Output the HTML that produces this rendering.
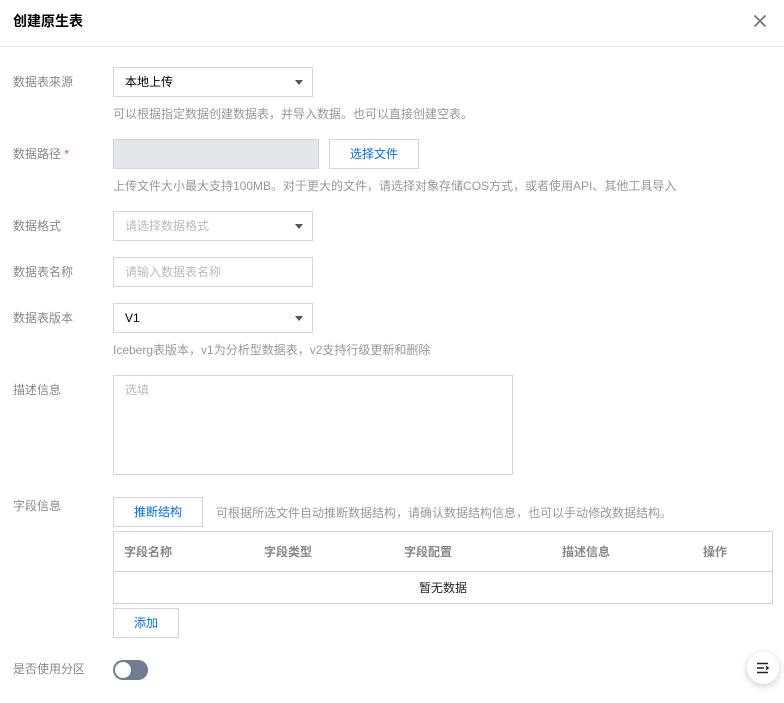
<!DOCTYPE html>
<html><head><meta charset="utf-8"><style>
*{margin:0;padding:0;box-sizing:border-box}
body{width:784px;height:703px;background:#fff;position:relative;overflow:hidden;font-family:"Liberation Sans","Noto Sans CJK SC",sans-serif;font-size:12px;color:#000}
.a{position:absolute;white-space:nowrap}
.lbl{color:#888;font-size:12px;line-height:16px}
.help{color:#999;font-size:12px;line-height:16px}
.box{position:absolute;border:1px solid #cfd5de;background:#fff}
.sel::after{content:"";position:absolute;right:9px;top:12px;border-left:4.5px solid transparent;border-right:4.5px solid transparent;border-top:5px solid #555}
.txt{position:absolute;left:11px;top:6px;line-height:16px;font-size:12px}
.ph{color:#bbb}
.btn{position:absolute;border:1px solid #cfd5de;background:#fff;color:#006eff;text-align:center;font-size:12px}
</style></head><body>
<div class="a" style="left:13px;top:12px;font-size:14px;font-weight:bold;line-height:18px;color:#000">创建原生表</div>
<svg class="a" style="left:753px;top:14px" width="14" height="14" viewBox="0 0 14 14"><path d="M1.5 1.5L12.5 12.5M12.5 1.5L1.5 12.5" stroke="#777" stroke-width="1.8"/></svg>
<div class="a" style="left:0;top:46px;width:784px;height:1px;background:#e5e5e5"></div>

<div class="a lbl" style="left:13px;top:74px">数据表来源</div>
<div class="box sel" style="left:113px;top:67px;width:200px;height:30px"><div class="txt">本地上传</div></div>
<div class="a help" style="left:113px;top:106px">可以根据指定数据创建数据表，并导入数据。也可以直接创建空表。</div>

<div class="a lbl" style="left:13px;top:146px">数据路径 <span style="color:#e54545">*</span></div>
<div class="box" style="left:113px;top:139px;width:206px;height:30px;background:#e3e6eb"></div>
<div class="btn" style="left:329px;top:139px;width:90px;height:30px;line-height:28px">选择文件</div>
<div class="a help" style="left:113px;top:178px">上传文件大小最大支持100MB。对于更大的文件，请选择对象存储COS方式，或者使用API、其他工具导入</div>

<div class="a lbl" style="left:13px;top:218px">数据格式</div>
<div class="box sel" style="left:113px;top:211px;width:200px;height:30px"><div class="txt ph">请选择数据格式</div></div>

<div class="a lbl" style="left:13px;top:264px">数据表名称</div>
<div class="box" style="left:113px;top:257px;width:200px;height:30px"><div class="txt ph">请输入数据表名称</div></div>

<div class="a lbl" style="left:13px;top:310px">数据表版本</div>
<div class="box sel" style="left:113px;top:303px;width:200px;height:30px"><div class="txt">V1</div></div>
<div class="a help" style="left:113px;top:342px">Iceberg表版本，v1为分析型数据表，v2支持行级更新和删除</div>

<div class="a lbl" style="left:13px;top:382px">描述信息</div>
<div class="box" style="left:113px;top:375px;width:400px;height:100px"><div class="txt ph" style="top:6px">选填</div></div>

<div class="a lbl" style="left:13px;top:498px">字段信息</div>
<div class="btn" style="left:113px;top:497px;width:90px;height:30px;line-height:28px">推断结构</div>
<div class="a help" style="left:216px;top:505px">可根据所选文件自动推断数据结构，请确认数据结构信息，也可以手动修改数据结构。</div>
<div class="box" style="left:113px;top:531px;width:660px;height:73px"></div>
<div class="a" style="left:114px;top:571px;width:658px;height:1px;background:#cfd5de"></div>
<div class="a" style="left:124px;top:544px;color:#888;font-weight:bold;line-height:16px">字段名称</div>
<div class="a" style="left:264px;top:544px;color:#888;font-weight:bold;line-height:16px">字段类型</div>
<div class="a" style="left:404px;top:544px;color:#888;font-weight:bold;line-height:16px">字段配置</div>
<div class="a" style="left:562px;top:544px;color:#888;font-weight:bold;line-height:16px">描述信息</div>
<div class="a" style="left:703px;top:544px;color:#888;font-weight:bold;line-height:16px">操作</div>
<div class="a" style="left:419px;top:580px;color:#222;line-height:16px">暂无数据</div>
<div class="btn" style="left:113px;top:608px;width:66px;height:30px;line-height:28px">添加</div>

<div class="a lbl" style="left:13px;top:661px">是否使用分区</div>
<div class="a" style="left:113px;top:660px;width:35px;height:20px;border-radius:10px;background:#6e7d92"></div>
<div class="a" style="left:115px;top:662px;width:16px;height:16px;border-radius:50%;background:#fff"></div>

<div class="a" style="left:747px;top:652px;width:32px;height:32px;border-radius:50%;background:#fff;box-shadow:0 2px 8px rgba(0,0,0,.2)"></div>
<svg class="a" style="left:756px;top:662px" width="14" height="12" viewBox="0 0 14 12"><path d="M1 1.5H12M1 6H8M1 10.5H12M10 4.5L12 6L10 7.5" stroke="#222" stroke-width="1.6" fill="none"/></svg>
</body></html>
